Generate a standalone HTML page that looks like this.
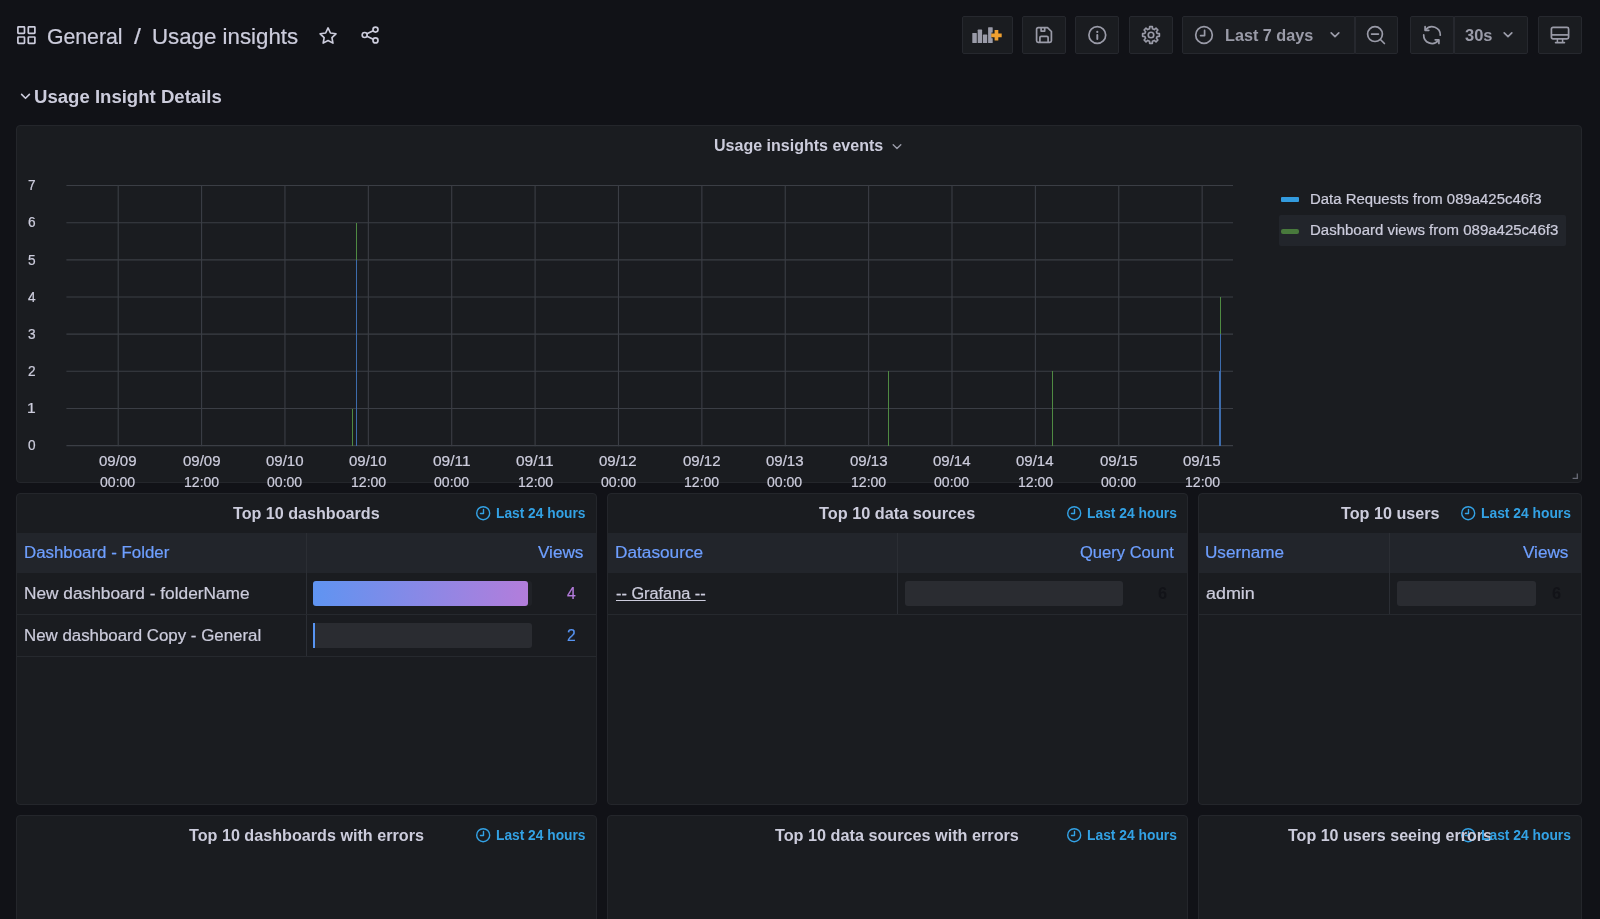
<!DOCTYPE html>
<html lang="en">
<head>
<meta charset="utf-8">
<title>Usage insights - Grafana</title>
<style>
*{box-sizing:border-box;margin:0;padding:0}
html,body{width:1600px;height:919px;overflow:hidden;background:#111217}
body{font-family:"Liberation Sans",Arial,sans-serif;color:#ccccdc;position:relative}
#app{position:absolute;left:0;top:0;width:1600px;height:919px;overflow:hidden;will-change:transform}
.abs{position:absolute}
.t{position:absolute;white-space:nowrap;line-height:1;transform-origin:0 0}
.tb{position:absolute;top:16px;height:38px;background:#1a1c20;border:1px solid #26282e;border-radius:2px}
svg{position:absolute;overflow:visible}
.panel{position:absolute;background:#1a1c20;border:1px solid #24262b;border-radius:4px;overflow:hidden}
.hdr{position:absolute;background:#22252b;height:40px;top:39px;left:0;right:0}
.sep{position:absolute;left:0;right:0;height:1px;background:#26292e}
.vsep{position:absolute;width:1px;background:#2b2e34}
.barbg{position:absolute;background:#2a2c31;border-radius:3px;height:25.2px}
</style>
</head>
<body>
<div id="app">
<div class="panel" style="left:16px;top:125px;width:1566px;height:358px"><div class="abs" style="left:1262px;top:89px;width:287px;height:31px;background:#22252b;border-radius:2px"></div><div class="abs" style="left:1264.4px;top:71.3px;width:17.4px;height:4.6px;background:#339bde;border-radius:1px"></div><div class="abs" style="left:1264.2px;top:102.7px;width:18px;height:5.2px;background:#48793c;border-radius:2px"></div><svg style="left:1555px;top:347px" width="6" height="6" viewBox="0 0 6 6" fill="none" stroke="#6a6c78" stroke-width="1.3"><path d="M5.3 0.6v4.7H0.6"/></svg></div>
<div class="panel" style="left:16px;top:493px;width:581px;height:312px"><div class="hdr"></div><div class="vsep" style="left:288.9px;top:39px;height:124px"></div><div class="sep" style="top:120px"></div><div class="barbg" style="left:296.3px;top:87px;width:218.7px;background:#202227"></div><div class="barbg" style="left:296.3px;top:87px;width:214.7px;background:linear-gradient(90deg,#5f94f1,#b37ddb);border-radius:3px"></div><div class="sep" style="top:162px"></div><div class="barbg" style="left:296.3px;top:129px;width:218.7px"></div><div class="barbg" style="left:296.3px;top:129px;width:1.6px;background:#5794f2;border-radius:0"></div></div>
<div class="panel" style="left:607px;top:493px;width:581px;height:312px"><div class="hdr"></div><div class="vsep" style="left:289px;top:39px;height:82px"></div><div class="sep" style="top:120px"></div><div class="barbg" style="left:296.7px;top:87px;width:218.3px"></div></div>
<div class="panel" style="left:1198px;top:493px;width:384px;height:312px"><div class="hdr"></div><div class="vsep" style="left:190.4000000000001px;top:39px;height:82px"></div><div class="sep" style="top:120px"></div><div class="barbg" style="left:198.3px;top:87px;width:138.6px"></div></div>
<div class="panel" style="left:16px;top:815px;width:581px;height:311px"></div>
<div class="panel" style="left:607px;top:815px;width:581px;height:311px"></div>
<div class="panel" style="left:1198px;top:815px;width:384px;height:311px"></div>
<svg style="left:0;top:0" width="1600" height="500" viewBox="0 0 1600 500" fill="none"><path d="M66.4 445.60H1233" stroke="#3b3e45" stroke-width="1.1"/><path d="M66.4 408.45H1233" stroke="#3b3e45" stroke-width="1.1"/><path d="M66.4 371.30H1233" stroke="#3b3e45" stroke-width="1.1"/><path d="M66.4 334.15H1233" stroke="#3b3e45" stroke-width="1.1"/><path d="M66.4 297.00H1233" stroke="#3b3e45" stroke-width="1.1"/><path d="M66.4 259.85H1233" stroke="#3b3e45" stroke-width="1.1"/><path d="M66.4 222.70H1233" stroke="#3b3e45" stroke-width="1.1"/><path d="M66.4 185.55H1233" stroke="#3b3e45" stroke-width="1.1"/><path d="M118.20 185V446.2" stroke="#3b3e45" stroke-width="1.1"/><path d="M201.58 185V446.2" stroke="#3b3e45" stroke-width="1.1"/><path d="M284.96 185V446.2" stroke="#3b3e45" stroke-width="1.1"/><path d="M368.34 185V446.2" stroke="#3b3e45" stroke-width="1.1"/><path d="M451.72 185V446.2" stroke="#3b3e45" stroke-width="1.1"/><path d="M535.10 185V446.2" stroke="#3b3e45" stroke-width="1.1"/><path d="M618.48 185V446.2" stroke="#3b3e45" stroke-width="1.1"/><path d="M701.86 185V446.2" stroke="#3b3e45" stroke-width="1.1"/><path d="M785.24 185V446.2" stroke="#3b3e45" stroke-width="1.1"/><path d="M868.62 185V446.2" stroke="#3b3e45" stroke-width="1.1"/><path d="M952.00 185V446.2" stroke="#3b3e45" stroke-width="1.1"/><path d="M1035.38 185V446.2" stroke="#3b3e45" stroke-width="1.1"/><path d="M1118.76 185V446.2" stroke="#3b3e45" stroke-width="1.1"/><path d="M1202.14 185V446.2" stroke="#3b3e45" stroke-width="1.1"/><path d="M352.5 445.6V408.5" stroke="#4f8a42" stroke-width="1" shape-rendering="crispEdges"/><path d="M356.5 259.9V222.7" stroke="#4f8a42" stroke-width="1" shape-rendering="crispEdges"/><path d="M356.5 445.6V259.9" stroke="#3d6cac" stroke-width="1" shape-rendering="crispEdges"/><path d="M888.5 445.6V371.3" stroke="#4f8a42" stroke-width="1" shape-rendering="crispEdges"/><path d="M1052.5 445.6V371.3" stroke="#4f8a42" stroke-width="1" shape-rendering="crispEdges"/><path d="M1220.5 334.2V297.0" stroke="#4f8a42" stroke-width="1" shape-rendering="crispEdges"/><path d="M1220.5 371.3V334.2" stroke="#3d6cac" stroke-width="1" shape-rendering="crispEdges"/><path d="M1220 445.6V371.3" stroke="#3d6cac" stroke-width="2" shape-rendering="crispEdges"/></svg>

<svg style="left:17px;top:26px" width="19" height="19" viewBox="0 0 19 19" fill="none" stroke="#ccccdc" stroke-width="1.7"><rect x="0.9" y="0.9" width="6.6" height="6.4" rx="0.6"/><rect x="11.3" y="0.9" width="6.6" height="6.4" rx="0.6"/><rect x="0.9" y="11" width="6.6" height="6.4" rx="0.6"/><rect x="11.3" y="11" width="6.6" height="6.4" rx="0.6"/></svg>
<svg style="left:317.3px;top:24.6px" width="22.1" height="22.1" viewBox="0 0 24 24" fill="none" stroke="#ccccdc" stroke-width="1.8" stroke-linejoin="round"><path d="M12 3.2l2.6 5.5 6 .85-4.35 4.2 1.05 5.95L12 16.85 6.7 19.7l1.05-5.95L3.4 9.55l6-.85z"/></svg>
<svg style="left:359.6px;top:25px" width="21" height="20" viewBox="0 0 24 24" fill="none" stroke="#ccccdc" stroke-width="2"><circle cx="18" cy="5.5" r="3"/><circle cx="5" cy="12" r="3"/><circle cx="18" cy="18.5" r="3"/><path d="M7.7 10.6l7.6-3.7M7.7 13.4l7.6 3.7"/></svg>
<div class="tb" style="left:962px;width:51px"></div>
<svg style="left:972px;top:27px" width="30" height="17" viewBox="0 0 30 17"><g fill="#9a9ba8"><rect x="0.3" y="6" width="4.5" height="10.1" rx="0.6"/><rect x="5.7" y="2.6" width="4.4" height="13.5" rx="0.6"/><rect x="10.9" y="7.6" width="4.3" height="8.5" rx="0.6"/><rect x="16.1" y="0.2" width="4.6" height="15.9" rx="0.6"/></g><path d="M24.45 3.4v9.9M19.5 8.35h9.9" stroke="#1a1c20" stroke-width="5.6" fill="none"/><path d="M24.45 3.1v10.5M19.2 8.35h10.5" stroke="#f0a030" stroke-width="3.7" fill="none"/></svg>
<div class="tb" style="left:1022px;width:44px"></div>
<svg style="left:1035px;top:26px" width="18" height="18" viewBox="0 0 18 18" fill="none" stroke="#9a9ba8" stroke-width="1.7" stroke-linejoin="round"><path d="M3.2 1.6h9.3l3.9 3.9v9.3a1.6 1.6 0 0 1-1.6 1.6H3.2a1.6 1.6 0 0 1-1.6-1.6V3.2a1.6 1.6 0 0 1 1.6-1.6z"/><path d="M6.1 1.8v3.3h3.6V1.8"/><path d="M4.9 16.2v-4.6a1.3 1.3 0 0 1 1.3-1.3h5.6a1.3 1.3 0 0 1 1.3 1.3v4.6"/></svg>
<div class="tb" style="left:1075px;width:44px"></div>
<svg style="left:1087px;top:25px" width="20" height="20" viewBox="0 0 20 20" fill="none" stroke="#9a9ba8" stroke-width="1.7"><circle cx="10.3" cy="10" r="8.4"/><path d="M10.3 9.9v4.1" stroke-width="1.9" stroke-linecap="round"/><circle cx="10.3" cy="6.9" r="1.1" fill="#9a9ba8" stroke="none"/></svg>
<div class="tb" style="left:1129px;width:44px"></div>
<svg style="left:1140.7px;top:25px" width="20" height="20" viewBox="0 0 24 24" fill="none" stroke="#9a9ba8" stroke-width="2" stroke-linejoin="round"><path d="M10.23,4.61 L10.40,1.93 L13.60,1.93 L13.77,4.61 L15.97,5.52 L18.00,3.75 L20.25,6.00 L18.48,8.03 L19.39,10.23 L22.07,10.40 L22.07,13.60 L19.39,13.77 L18.48,15.97 L20.25,18.00 L18.00,20.25 L15.97,18.48 L13.77,19.39 L13.60,22.07 L10.40,22.07 L10.23,19.39 L8.03,18.48 L6.00,20.25 L3.75,18.00 L5.52,15.97 L4.61,13.77 L1.93,13.60 L1.93,10.40 L4.61,10.23 L5.52,8.03 L3.75,6.00 L6.00,3.75 L8.03,5.52Z"/><circle cx="12" cy="12" r="3.3"/></svg>
<div class="tb" style="left:1182px;width:173px;border-radius:2px 0 0 2px"></div>
<div class="tb" style="left:1355px;width:43px;border-radius:0 2px 2px 0"></div>
<svg style="left:1194px;top:25px" width="20" height="20" viewBox="0 0 20 20" fill="none" stroke="#9a9ba8" stroke-width="1.7" stroke-linecap="round" stroke-linejoin="round"><circle cx="10" cy="10" r="8.3"/><path d="M10.6 5.4v5.2H6.6"/></svg>
<svg style="left:1330px;top:31px" width="10" height="8" viewBox="0 0 10 8" fill="none" stroke="#9a9ba8" stroke-width="1.7" stroke-linecap="round" stroke-linejoin="round"><path d="M1.2 1.8L5 5.6l3.8-3.8"/></svg>
<svg style="left:1366px;top:25px" width="21" height="21" viewBox="0 0 21 21" fill="none" stroke="#9a9ba8" stroke-width="1.7" stroke-linecap="round"><circle cx="9" cy="9.1" r="7.4"/><path d="M5.6 9.1h6.8M14.4 14.5l4 4"/></svg>
<div class="tb" style="left:1410px;width:44px;border-radius:2px 0 0 2px"></div>
<div class="tb" style="left:1454px;width:74px;border-radius:0 2px 2px 0"></div>
<svg style="left:1421.5px;top:25px" width="20" height="20" viewBox="0 0 20 20" fill="none" stroke="#9a9ba8" stroke-width="1.7" stroke-linecap="round" stroke-linejoin="round"><path d="M18.3 10.2A8.3 8.3 0 0 0 3.6 4.7"/><path d="M3.1 1.7v3.6h3.7"/><path d="M1.7 9.9A8.3 8.3 0 0 0 16.4 15.4"/><path d="M16.9 18.4v-3.6h-3.7"/></svg>
<svg style="left:1503px;top:31px" width="10" height="8" viewBox="0 0 10 8" fill="none" stroke="#9a9ba8" stroke-width="1.7" stroke-linecap="round" stroke-linejoin="round"><path d="M1.2 1.8L5 5.6l3.8-3.8"/></svg>
<div class="tb" style="left:1538px;width:44px"></div>
<svg style="left:1550px;top:26px" width="20" height="18" viewBox="0 0 20 18" fill="none" stroke="#9a9ba8" stroke-width="1.7" stroke-linejoin="round"><rect x="1.4" y="1.4" width="17.2" height="11.4" rx="1.6"/><path d="M1.6 8.9h17"/><path d="M5.6 16.6h8.8" stroke-linecap="round" stroke-width="1.7"/><path d="M7.4 13v3.4M12.6 13v3.4" stroke-width="1.5"/></svg>
<svg style="left:20px;top:92px" width="11" height="9" viewBox="0 0 11 9" fill="none" stroke="#ccccdc" stroke-width="1.6" stroke-linecap="round" stroke-linejoin="round"><path d="M1.6 2.4l3.9 3.9 3.9-3.9"/></svg>
<svg style="left:891.5px;top:142.5px" width="10" height="8" viewBox="0 0 10 8" fill="none" stroke="#9a9ba8" stroke-width="1.4" stroke-linecap="round" stroke-linejoin="round"><path d="M1.2 1.8L5 5.6l3.8-3.8"/></svg>
<svg style="left:475.8px;top:506px" width="14.4" height="14.4" viewBox="0 0 14.4 14.4" fill="none" stroke="#33a2e5" stroke-width="1.4" stroke-linecap="round" stroke-linejoin="round"><circle cx="7.2" cy="7.2" r="6.5"/><path d="M7.5 3.456V7.5H4.464"/></svg><svg style="left:475.8px;top:827.7px" width="14.4" height="14.4" viewBox="0 0 14.4 14.4" fill="none" stroke="#33a2e5" stroke-width="1.4" stroke-linecap="round" stroke-linejoin="round"><circle cx="7.2" cy="7.2" r="6.5"/><path d="M7.5 3.456V7.5H4.464"/></svg><svg style="left:1066.8px;top:506px" width="14.4" height="14.4" viewBox="0 0 14.4 14.4" fill="none" stroke="#33a2e5" stroke-width="1.4" stroke-linecap="round" stroke-linejoin="round"><circle cx="7.2" cy="7.2" r="6.5"/><path d="M7.5 3.456V7.5H4.464"/></svg><svg style="left:1066.8px;top:827.7px" width="14.4" height="14.4" viewBox="0 0 14.4 14.4" fill="none" stroke="#33a2e5" stroke-width="1.4" stroke-linecap="round" stroke-linejoin="round"><circle cx="7.2" cy="7.2" r="6.5"/><path d="M7.5 3.456V7.5H4.464"/></svg><svg style="left:1460.8px;top:506px" width="14.4" height="14.4" viewBox="0 0 14.4 14.4" fill="none" stroke="#33a2e5" stroke-width="1.4" stroke-linecap="round" stroke-linejoin="round"><circle cx="7.2" cy="7.2" r="6.5"/><path d="M7.5 3.456V7.5H4.464"/></svg><svg style="left:1460.8px;top:827.7px" width="14.4" height="14.4" viewBox="0 0 14.4 14.4" fill="none" stroke="#33a2e5" stroke-width="1.4" stroke-linecap="round" stroke-linejoin="round"><circle cx="7.2" cy="7.2" r="6.5"/><path d="M7.5 3.456V7.5H4.464"/></svg>
<div class="t" style="left:47.06px;top:25.65px;font-size:22.5px;color:#ccccdc;transform:scaleX(0.9430);-webkit-text-stroke:0.22px #ccccdc;">General</div>
<div class="t" style="left:133.70px;top:25.65px;font-size:22.5px;color:#ccccdc;transform:scaleX(1.1000);-webkit-text-stroke:0.22px #ccccdc;">/</div>
<div class="t" style="left:151.71px;top:25.65px;font-size:22.5px;color:#ccccdc;transform:scaleX(0.9902);-webkit-text-stroke:0.22px #ccccdc;">Usage insights</div>
<div class="t" style="left:34.38px;top:87.71px;font-size:18.3px;color:#ccccdc;transform:scaleX(1.0156);font-weight:bold;">Usage Insight Details</div>
<div class="t" style="left:1224.59px;top:27.86px;font-size:16px;color:#9a9ba8;transform:scaleX(1.0132);font-weight:bold;">Last 7 days</div>
<div class="t" style="left:1465.00px;top:27.86px;font-size:16px;color:#9a9ba8;transform:scaleX(1.0300);font-weight:bold;">30s</div>
<div class="t" style="left:713.80px;top:138.06px;font-size:16px;color:#ccccdc;transform:scaleX(1.0015);font-weight:bold;">Usage insights events</div>
<div class="t" style="left:27.80px;top:438.25px;font-size:14px;color:#ccccdc;transform:scaleX(0.9750);-webkit-text-stroke:0.22px #ccccdc;">0</div>
<div class="t" style="left:26.69px;top:401.10px;font-size:14px;color:#ccccdc;transform:scaleX(1.1143);-webkit-text-stroke:0.22px #ccccdc;">1</div>
<div class="t" style="left:27.80px;top:363.95px;font-size:14px;color:#ccccdc;transform:scaleX(0.9750);-webkit-text-stroke:0.22px #ccccdc;">2</div>
<div class="t" style="left:27.80px;top:326.80px;font-size:14px;color:#ccccdc;transform:scaleX(0.9750);-webkit-text-stroke:0.22px #ccccdc;">3</div>
<div class="t" style="left:27.80px;top:289.65px;font-size:14px;color:#ccccdc;transform:scaleX(0.9750);-webkit-text-stroke:0.22px #ccccdc;">4</div>
<div class="t" style="left:27.80px;top:252.50px;font-size:14px;color:#ccccdc;transform:scaleX(0.9750);-webkit-text-stroke:0.22px #ccccdc;">5</div>
<div class="t" style="left:27.80px;top:215.35px;font-size:14px;color:#ccccdc;transform:scaleX(0.9750);-webkit-text-stroke:0.22px #ccccdc;">6</div>
<div class="t" style="left:27.80px;top:178.20px;font-size:14px;color:#ccccdc;transform:scaleX(0.9750);-webkit-text-stroke:0.22px #ccccdc;">7</div>
<div class="t" style="left:99.20px;top:454.25px;font-size:14px;color:#ccccdc;transform:scaleX(1.0724);-webkit-text-stroke:0.22px #ccccdc;">09/09</div>
<div class="t" style="left:100.40px;top:474.55px;font-size:14px;color:#ccccdc;transform:scaleX(1.0043);-webkit-text-stroke:0.22px #ccccdc;">00:00</div>
<div class="t" style="left:182.58px;top:454.25px;font-size:14px;color:#ccccdc;transform:scaleX(1.0724);-webkit-text-stroke:0.22px #ccccdc;">09/09</div>
<div class="t" style="left:183.98px;top:474.55px;font-size:14px;color:#ccccdc;transform:scaleX(1.0044);-webkit-text-stroke:0.22px #ccccdc;">12:00</div>
<div class="t" style="left:265.96px;top:454.25px;font-size:14px;color:#ccccdc;transform:scaleX(1.0724);-webkit-text-stroke:0.22px #ccccdc;">09/10</div>
<div class="t" style="left:267.16px;top:474.55px;font-size:14px;color:#ccccdc;transform:scaleX(1.0043);-webkit-text-stroke:0.22px #ccccdc;">00:00</div>
<div class="t" style="left:349.34px;top:454.25px;font-size:14px;color:#ccccdc;transform:scaleX(1.0724);-webkit-text-stroke:0.22px #ccccdc;">09/10</div>
<div class="t" style="left:350.74px;top:474.55px;font-size:14px;color:#ccccdc;transform:scaleX(1.0044);-webkit-text-stroke:0.22px #ccccdc;">12:00</div>
<div class="t" style="left:432.72px;top:454.25px;font-size:14px;color:#ccccdc;transform:scaleX(1.1050);-webkit-text-stroke:0.22px #ccccdc;">09/11</div>
<div class="t" style="left:433.92px;top:474.55px;font-size:14px;color:#ccccdc;transform:scaleX(1.0043);-webkit-text-stroke:0.22px #ccccdc;">00:00</div>
<div class="t" style="left:516.10px;top:454.25px;font-size:14px;color:#ccccdc;transform:scaleX(1.1050);-webkit-text-stroke:0.22px #ccccdc;">09/11</div>
<div class="t" style="left:517.50px;top:474.55px;font-size:14px;color:#ccccdc;transform:scaleX(1.0044);-webkit-text-stroke:0.22px #ccccdc;">12:00</div>
<div class="t" style="left:599.48px;top:454.25px;font-size:14px;color:#ccccdc;transform:scaleX(1.0724);-webkit-text-stroke:0.22px #ccccdc;">09/12</div>
<div class="t" style="left:600.68px;top:474.55px;font-size:14px;color:#ccccdc;transform:scaleX(1.0043);-webkit-text-stroke:0.22px #ccccdc;">00:00</div>
<div class="t" style="left:682.86px;top:454.25px;font-size:14px;color:#ccccdc;transform:scaleX(1.0724);-webkit-text-stroke:0.22px #ccccdc;">09/12</div>
<div class="t" style="left:684.26px;top:474.55px;font-size:14px;color:#ccccdc;transform:scaleX(1.0044);-webkit-text-stroke:0.22px #ccccdc;">12:00</div>
<div class="t" style="left:766.24px;top:454.25px;font-size:14px;color:#ccccdc;transform:scaleX(1.0724);-webkit-text-stroke:0.22px #ccccdc;">09/13</div>
<div class="t" style="left:767.44px;top:474.55px;font-size:14px;color:#ccccdc;transform:scaleX(1.0043);-webkit-text-stroke:0.22px #ccccdc;">00:00</div>
<div class="t" style="left:849.62px;top:454.25px;font-size:14px;color:#ccccdc;transform:scaleX(1.0724);-webkit-text-stroke:0.22px #ccccdc;">09/13</div>
<div class="t" style="left:851.02px;top:474.55px;font-size:14px;color:#ccccdc;transform:scaleX(1.0044);-webkit-text-stroke:0.22px #ccccdc;">12:00</div>
<div class="t" style="left:933.00px;top:454.25px;font-size:14px;color:#ccccdc;transform:scaleX(1.0724);-webkit-text-stroke:0.22px #ccccdc;">09/14</div>
<div class="t" style="left:934.20px;top:474.55px;font-size:14px;color:#ccccdc;transform:scaleX(1.0043);-webkit-text-stroke:0.22px #ccccdc;">00:00</div>
<div class="t" style="left:1016.38px;top:454.25px;font-size:14px;color:#ccccdc;transform:scaleX(1.0724);-webkit-text-stroke:0.22px #ccccdc;">09/14</div>
<div class="t" style="left:1017.78px;top:474.55px;font-size:14px;color:#ccccdc;transform:scaleX(1.0044);-webkit-text-stroke:0.22px #ccccdc;">12:00</div>
<div class="t" style="left:1099.76px;top:454.25px;font-size:14px;color:#ccccdc;transform:scaleX(1.0724);-webkit-text-stroke:0.22px #ccccdc;">09/15</div>
<div class="t" style="left:1100.96px;top:474.55px;font-size:14px;color:#ccccdc;transform:scaleX(1.0043);-webkit-text-stroke:0.22px #ccccdc;">00:00</div>
<div class="t" style="left:1183.14px;top:454.25px;font-size:14px;color:#ccccdc;transform:scaleX(1.0724);-webkit-text-stroke:0.22px #ccccdc;">09/15</div>
<div class="t" style="left:1184.54px;top:474.55px;font-size:14px;color:#ccccdc;transform:scaleX(1.0044);-webkit-text-stroke:0.22px #ccccdc;">12:00</div>
<div class="t" style="left:1309.93px;top:191.75px;font-size:14px;color:#ccccdc;transform:scaleX(1.0659);-webkit-text-stroke:0.22px #ccccdc;">Data Requests from 089a425c46f3</div>
<div class="t" style="left:1309.93px;top:222.75px;font-size:14px;color:#ccccdc;transform:scaleX(1.0704);-webkit-text-stroke:0.22px #ccccdc;">Dashboard views from 089a425c46f3</div>
<div class="t" style="left:233.20px;top:505.76px;font-size:16px;color:#ccccdc;transform:scaleX(1.0075);font-weight:bold;">Top 10 dashboards</div>
<div class="t" style="left:496.20px;top:505.85px;font-size:14px;color:#33a2e5;transform:scaleX(0.9831);font-weight:bold;">Last 24 hours</div>
<div class="t" style="left:23.65px;top:544.56px;font-size:16px;color:#6e9fff;transform:scaleX(1.0537);-webkit-text-stroke:0.22px #6e9fff;">Dashboard - Folder</div>
<div class="t" style="left:537.90px;top:544.56px;font-size:16px;color:#6e9fff;transform:scaleX(1.0710);-webkit-text-stroke:0.22px #6e9fff;">Views</div>
<div class="t" style="left:23.62px;top:585.66px;font-size:16px;color:#ccccdc;transform:scaleX(1.0793);-webkit-text-stroke:0.22px #ccccdc;">New dashboard - folderName</div>
<div class="t" style="left:23.65px;top:628.46px;font-size:16px;color:#ccccdc;transform:scaleX(1.0539);-webkit-text-stroke:0.22px #ccccdc;">New dashboard Copy - General</div>
<div class="t" style="left:567.30px;top:585.66px;font-size:16px;color:#b47cdc;transform:scaleX(0.9778);-webkit-text-stroke:0.22px #b47cdc;">4</div>
<div class="t" style="left:567.30px;top:628.46px;font-size:16px;color:#5794f2;transform:scaleX(0.9778);-webkit-text-stroke:0.22px #5794f2;">2</div>
<div class="t" style="left:819.30px;top:505.76px;font-size:16px;color:#ccccdc;transform:scaleX(1.0174);font-weight:bold;">Top 10 data sources</div>
<div class="t" style="left:1086.80px;top:505.85px;font-size:14px;color:#33a2e5;transform:scaleX(0.9875);font-weight:bold;">Last 24 hours</div>
<div class="t" style="left:614.62px;top:544.56px;font-size:16px;color:#6e9fff;transform:scaleX(1.0763);-webkit-text-stroke:0.22px #6e9fff;">Datasource</div>
<div class="t" style="left:1079.90px;top:544.56px;font-size:16px;color:#6e9fff;transform:scaleX(1.0343);-webkit-text-stroke:0.22px #6e9fff;">Query Count</div>
<div class="t" style="left:615.50px;top:585.66px;font-size:16px;color:#ccccdc;transform:scaleX(1.0184);-webkit-text-stroke:0.22px #ccccdc;text-decoration:underline;">-- Grafana --</div>
<div class="t" style="left:1158.30px;top:585.66px;font-size:16px;color:#121318;transform:scaleX(1.0222);font-weight:bold;">6</div>
<div class="t" style="left:1340.60px;top:505.76px;font-size:16px;color:#ccccdc;transform:scaleX(1.0111);font-weight:bold;">Top 10 users</div>
<div class="t" style="left:1480.50px;top:505.85px;font-size:14px;color:#33a2e5;transform:scaleX(0.9875);font-weight:bold;">Last 24 hours</div>
<div class="t" style="left:1205.13px;top:544.56px;font-size:16px;color:#6e9fff;transform:scaleX(1.0699);-webkit-text-stroke:0.22px #6e9fff;">Username</div>
<div class="t" style="left:1522.50px;top:544.56px;font-size:16px;color:#6e9fff;transform:scaleX(1.0710);-webkit-text-stroke:0.22px #6e9fff;">Views</div>
<div class="t" style="left:1206.20px;top:585.66px;font-size:16px;color:#ccccdc;transform:scaleX(1.1200);-webkit-text-stroke:0.22px #ccccdc;">admin</div>
<div class="t" style="left:1551.50px;top:585.66px;font-size:16px;color:#121318;transform:scaleX(1.0222);font-weight:bold;">6</div>
<div class="t" style="left:189.00px;top:828.26px;font-size:16px;color:#ccccdc;transform:scaleX(1.0097);font-weight:bold;">Top 10 dashboards with errors</div>
<div class="t" style="left:496.20px;top:827.55px;font-size:14px;color:#33a2e5;transform:scaleX(0.9831);font-weight:bold;">Last 24 hours</div>
<div class="t" style="left:775.00px;top:828.26px;font-size:16px;color:#ccccdc;transform:scaleX(1.0134);font-weight:bold;">Top 10 data sources with errors</div>
<div class="t" style="left:1086.80px;top:827.55px;font-size:14px;color:#33a2e5;transform:scaleX(0.9875);font-weight:bold;">Last 24 hours</div>
<div class="t" style="left:1287.50px;top:828.26px;font-size:16px;color:#ccccdc;transform:scaleX(1.0027);font-weight:bold;">Top 10 users seeing errors</div>
<div class="t" style="left:1480.50px;top:827.55px;font-size:14px;color:#33a2e5;transform:scaleX(0.9875);font-weight:bold;">Last 24 hours</div>
</div>
</body>
</html>
